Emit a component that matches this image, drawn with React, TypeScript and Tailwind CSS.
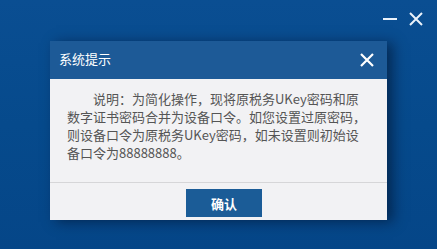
export default function App() {
  const font = { fontFamily: '"Noto Sans CJK SC", "Noto Sans", sans-serif' };
  return (
    <div
      className="w-[437px] h-[249px] overflow-hidden bg-gradient-to-b from-[#0a4e92] via-[#064a8c] to-[#054688]"
      style={font}
    >
      <div className="flex justify-end items-center gap-[12px] h-[37px] pr-[14px] pt-[1px]">
        <svg width="14" height="14" viewBox="0 0 14 14">
          <path d="M0 7h14" stroke="#eaf2fb" strokeWidth="2" />
        </svg>
        <svg width="14" height="14" viewBox="0 0 14 14">
          <path d="M1 1l12 12M13 1L1 13" stroke="#eaf2fb" strokeWidth="2" />
        </svg>
      </div>
      <div className="pl-[50px] pt-[4px]">
        <div className="w-[337px] shadow-[6px_2px_12px_rgba(0,10,30,0.5)]">
          <div className="h-[38px] bg-[#1d5a97] flex items-center justify-between pl-[9px] pr-[13px]">
            <span className="text-[13px] text-white leading-none -mt-[3px]">系统提示</span>
            <svg width="14" height="14" viewBox="0 0 14 14">
              <path d="M1 1l12 12M13 1L1 13" stroke="#ffffff" strokeWidth="2.2" />
            </svg>
          </div>
          <div className="bg-[#f2f2f4] h-[103px] pt-[11px] pl-[17px]">
            <p className="w-[300px] text-[13px] leading-[18px] text-[#555555] indent-[2em] break-all">
              说明：为简化操作，现将原税务UKey密码和原数字证书密码合并为设备口令。如您设置过原密码，则设备口令为原税务UKey密码，如未设置则初始设备口令为88888888。
            </p>
          </div>
          <div className="h-px bg-[#d6d6d8]" />
          <div className="bg-[#f2f2f4] h-[37px] flex justify-center items-start pt-[6px] pl-[11px]">
            <button className="w-[76px] h-[28px] bg-[#1b5c97] text-white text-[13px] font-bold leading-none">
              确认
            </button>
          </div>
        </div>
      </div>
    </div>
  );
}
